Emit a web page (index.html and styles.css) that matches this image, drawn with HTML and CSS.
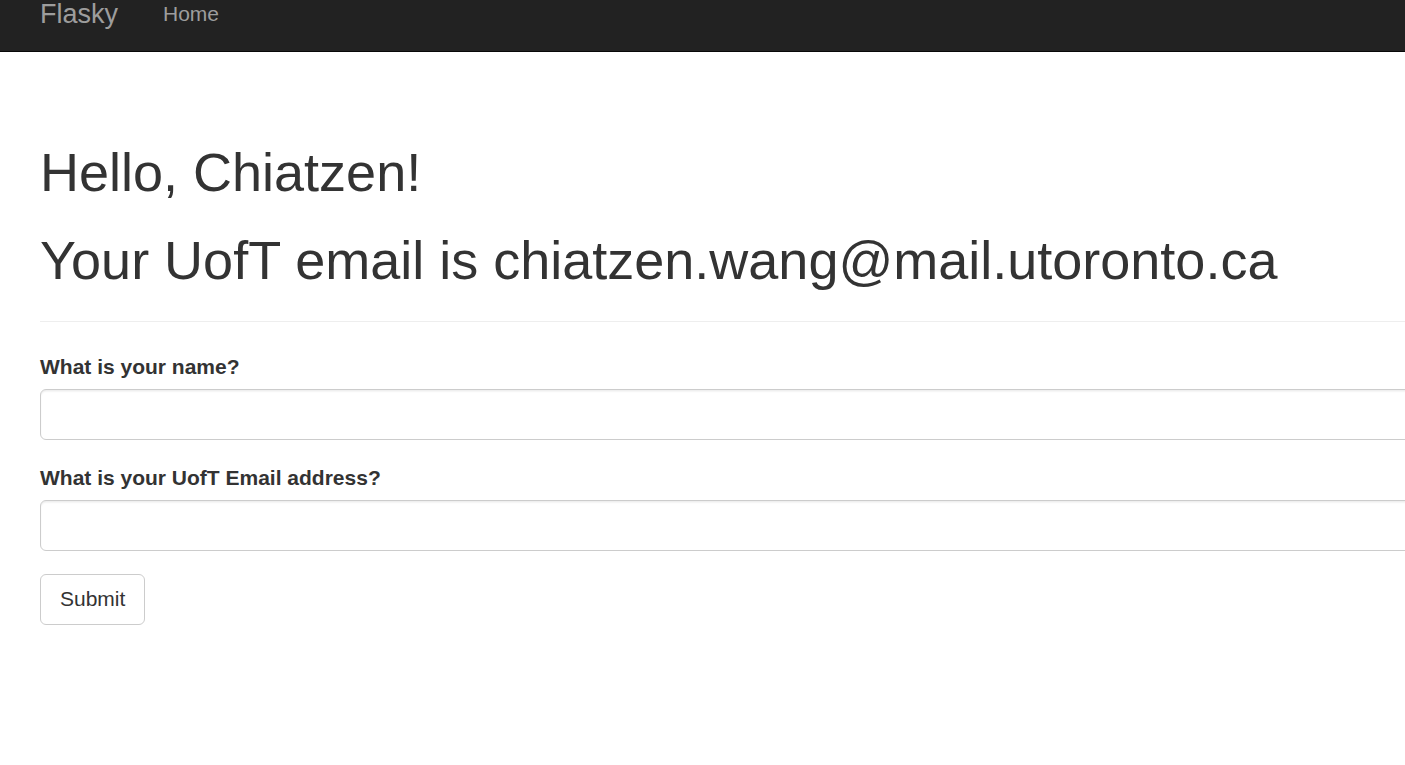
FILE: index.html
```html
<!DOCTYPE html>
<html lang="en">
<head>
<meta charset="utf-8">
<title>Flasky</title>
<link rel="stylesheet" href="styles.css">
</head>
<body>
<nav class="navbar">
  <div class="navbar-inner">
    <a class="brand" href="#">Flasky</a>
    <a class="nav-link" href="#">Home</a>
  </div>
</nav>
<main class="container">
  <div class="page-header">
    <h1 class="heading">Hello, Chiatzen!</h1>
    <h1 class="heading">Your UofT email is chiatzen.wang@mail.utoronto.ca</h1>
  </div>
  <form class="form">
    <div class="form-group">
      <label class="label" for="name">What is your name?</label>
      <input class="input" id="name" type="text">
    </div>
    <div class="form-group">
      <label class="label" for="email">What is your UofT Email address?</label>
      <input class="input" id="email" type="text">
    </div>
    <button class="btn" type="submit">Submit</button>
  </form>
</main>
</body>
</html>
```

FILE: styles.css
```css
html, body {
  margin: 0;
  padding: 0;
  overflow: hidden;
  background: #fff;
}
body {
  font-family: "Liberation Sans", Arial, Helvetica, sans-serif;
  color: #333;
  width: 1405px;
  height: 765px;
}
.navbar {
  background: #222;
  height: 51px;
  border-bottom: 1px solid #080808;
}
.navbar-inner {
  display: flex;
  align-items: flex-start;
  padding-left: 40px;
}
.brand {
  font-size: 27px;
  line-height: 30px;
  color: #9d9d9d;
  text-decoration: none;
  margin-top: -1px;
  padding-right: 22.5px;
}
.nav-link {
  font-size: 21px;
  line-height: 30px;
  color: #9d9d9d;
  text-decoration: none;
  padding-left: 22.5px;
  margin-top: -1px;
}
.container {
  width: 1420px;
  padding-left: 40px;
}
.page-header {
  padding-top: 91px;
  padding-bottom: 15.5px;
  margin-bottom: 30px;
  border-bottom: 1px solid #eee;
}
.heading {
  font-size: 54px;
  font-weight: 500;
  line-height: 59px;
  margin: 0 0 29px;
  color: #333;
}
.heading:last-child {
  margin-bottom: 15px;
}
.form-group {
  display: flex;
  flex-direction: column;
  align-items: stretch;
  margin-bottom: 22.5px;
}
.label {
  font-size: 21px;
  font-weight: bold;
  line-height: 30px;
  margin-bottom: 7.5px;
  color: #333;
}
.input {
  box-sizing: border-box;
  height: 51px;
  border: 1px solid #ccc;
  border-radius: 6px;
  box-shadow: inset 0 1.5px 1.5px rgba(0,0,0,.075);
  padding: 9px 18px;
  font-size: 21px;
  font-family: inherit;
  background: #fff;
}
.btn {
  box-sizing: border-box;
  height: 51px;
  padding: 0 19px;
  border: 1px solid #ccc;
  border-radius: 6px;
  background: #fff;
  color: #333;
  font-family: inherit;
  font-size: 21px;
  line-height: 30px;
}
```
